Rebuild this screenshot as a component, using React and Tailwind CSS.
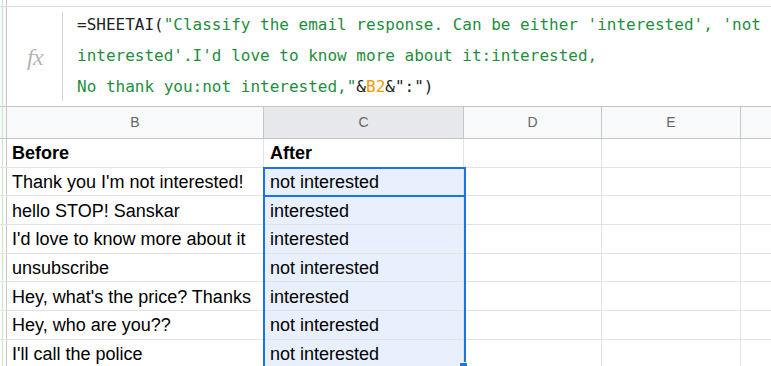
import React from 'react';

const cols = [
  { key: 'B', w: 'w-[257px]' },
  { key: 'C', w: 'w-[200px]' },
  { key: 'D', w: 'w-[138px]' },
  { key: 'E', w: 'w-[139px]' },
  { key: 'F', w: 'w-[30px]' },
];

const rows = [
  ["Thank you I'm not interested!", 'not interested'],
  ['hello STOP! Sanskar', 'interested'],
  ["I'd love to know more about it", 'interested'],
  ['unsubscribe', 'not interested'],
  ["Hey, what's the price? Thanks", 'interested'],
  ['Hey, who are you??', 'not interested'],
  ["I'll call the police", 'not interested'],
];

const LeftStrip = ({ className = '' }) => (
  <div className={`w-[7px] shrink-0 flex border-r border-[#c7c7c7] ${className}`}>
    <div className="w-[2px]" />
    <div className="w-px bg-[#c8ecc8]" />
  </div>
);

const Row = ({ before, after, bold, selected }) => (
  <div className="flex h-[28.7px] border-b border-[#e2e3e3]">
    <LeftStrip className="bg-white" />
    <div className={`w-[257px] shrink-0 border-r border-[#e2e3e3] pl-[5px] pt-[2px] flex items-center ${bold ? 'font-bold' : ''}`}>
      {before}
    </div>
    <div className={`w-[200px] shrink-0 border-r border-[#e2e3e3] pl-[6px] pt-[2px] flex items-center ${bold ? 'font-bold' : ''} ${selected ? 'bg-[#e8f0fe]' : ''}`}>
      {after}
    </div>
    <div className="w-[138px] shrink-0 border-r border-[#e2e3e3]" />
    <div className="w-[139px] shrink-0 border-r border-[#e2e3e3]" />
    <div className="flex-1" />
  </div>
);

export default function App() {
  return (
    <div className="relative w-[771px] h-[366px] overflow-hidden bg-white text-[#000] font-['Liberation_Sans',Arial,sans-serif]">
      {/* top strip */}
      <div className="flex h-[7px] border-b border-[#dadce0]">
        <LeftStrip />
      </div>

      {/* formula bar */}
      <div className="flex h-[99px]">
        <LeftStrip className="bg-[#f8f9fa]" />
        <div className="w-[56px] shrink-0 flex items-center justify-center py-[5px] relative">
          <span className="font-['Liberation_Serif',serif] italic text-[24px] text-[#b4b4b4] tracking-tight">fx</span>
          <div className="absolute right-0 top-[5px] bottom-[5px] w-px bg-[#d5d5d5]" />
        </div>
        <div className="pl-[14px] pt-[2px] font-['DejaVu_Sans_Mono',monospace] text-[16px] leading-[31px] text-[#1e8e3e] whitespace-pre">
          <div><span className="text-[#202124]">=SHEETAI(</span>"Classify the email response. Can be either 'interested', 'not</div>
          <div>interested'.I'd love to know more about it:interested,</div>
          <div>No thank you:not interested,"<span className="text-[#202124]">&</span><span className="text-[#f29900]">B2</span><span className="text-[#202124]">&":")</span></div>
        </div>
      </div>

      {/* column headers */}
      <div className="flex h-[33px] border-y border-[#c4c7c5] bg-[#f8f9fa] text-[14px] text-[#666]">
        <LeftStrip className="bg-[#f8f9fa]" />
        {cols.map((c) => (
          <div
            key={c.key}
            className={`${c.w} shrink-0 flex items-center justify-center border-r border-[#c4c7c5] ${c.key === 'C' ? 'bg-[#e6e8eb]' : ''} ${c.key === 'F' ? 'flex-1 border-r-0' : ''}`}
          >
            {c.key === 'F' ? '' : c.key}
          </div>
        ))}
      </div>

      {/* grid */}
      <div className="text-[18px]">
        <Row before="Before" after="After" bold />
        {rows.map(([b, a]) => (
          <Row key={b} before={b} after={a} selected />
        ))}
      </div>

      {/* selection range outline */}
      <div className="absolute left-[263px] top-[167px] w-[203px] h-[220px] border-x-2 border-t-2 border-[#1a73e8] pointer-events-none" />
      {/* active cell */}
      <div className="absolute left-[263px] top-[167px] w-[203px] h-[30px] border-[2.5px] border-[#1a73e8] pointer-events-none" />
      {/* fill handle */}
      <div className="absolute left-[459px] top-[362px] w-[9px] h-[9px] bg-[#1a73e8] border border-white pointer-events-none" />
    </div>
  );
}
